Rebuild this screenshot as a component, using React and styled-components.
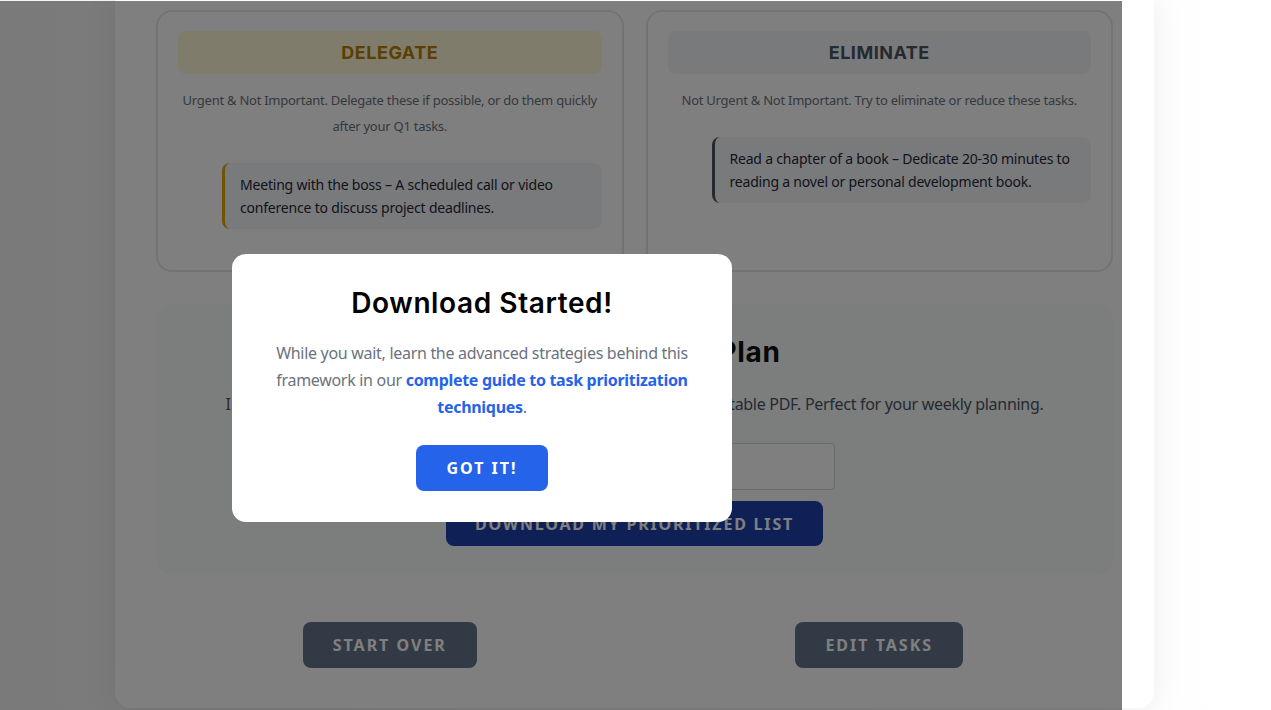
import React from 'react'
import styled, { createGlobalStyle } from 'styled-components'

const GlobalStyle = createGlobalStyle`
  html, body {
    margin: 0;
    padding: 0;
  }
  body {
    background: linear-gradient(90deg, #f5f5f5 0%, #fafafa 60%, #ffffff 100%);
    font-family: "Noto Sans", "Open Sans", sans-serif;
    color: #1f2937;
    overflow: hidden;
  }
`

const Page = styled.div`
  height: 710px;
  padding-right: 2px;
  overflow: hidden;
`

const Card = styled.div`
  width: 1039px;
  margin: 0 auto;
  box-sizing: border-box;
  padding: 10px 41px 40px;
  background: #ffffff;
  border-radius: 0 0 16px 16px;
  box-shadow: 0 0 34px rgba(0, 0, 0, 0.07);
`

const Matrix = styled.div`
  display: grid;
  grid-template-columns: 1fr 1fr;
  gap: 22px;
`

const Quadrant = styled.div`
  border: 2px solid #e5e7eb;
  border-radius: 16px;
  padding: 19px 20px 41px;
`

const Band = styled.h3`
  margin: 0;
  padding: 11px 0;
  border-radius: 8px;
  background: ${p => p.bg};
  color: ${p => p.color};
  font-family: Inter, "Noto Sans", sans-serif;
  font-size: 18px;
  font-weight: 700;
  line-height: 21px;
  text-align: center;
  letter-spacing: 0.5px;
`

const Desc = styled.p`
  margin: 13px 0 24px;
  font-size: 13px;
  line-height: 26px;
  color: #6b7280;
  text-align: center;
  letter-spacing: -0.25px;
`

const TaskList = styled.ul`
  list-style: none;
  margin: 0;
  padding: 0 0 0 44px;
`

const Task = styled.li`
  background: #f3f4f6;
  border-left: 3px solid ${p => p.accent};
  border-radius: 8px;
  padding: 10px 14px 10px 15px;
  font-size: 14px;
  line-height: 23px;
  color: #1f2937;
  letter-spacing: -0.2px;
`

const Export = styled.section`
  margin-top: 32px;
  background: #f9fafb;
  border-radius: 16px;
  padding: 31px 40px 29px;
  display: flex;
  flex-direction: column;
  align-items: center;
`

const ExportTitle = styled.h2`
  margin: 0;
  font-family: Inter, "Noto Sans", sans-serif;
  font-size: 28px;
  font-weight: 700;
  line-height: 34px;
  letter-spacing: 0.6px;
  color: #111111;
`

const ExportText = styled.p`
  margin: 23px 0 27px;
  font-size: 16px;
  line-height: 24px;
  color: #4b5563;
  text-align: center;
  letter-spacing: -0.3px;
  white-space: nowrap;
`

const EmailInput = styled.input`
  width: 400px;
  height: 47px;
  box-sizing: border-box;
  border: 1px solid #d1d5db;
  border-radius: 4px;
  padding: 0 14px;
  font-size: 16px;
  font-family: inherit;
  background: #ffffff;
`

const Button = styled.button`
  height: ${p => p.h || '46px'};
  padding: 0 ${p => p.px || '30px'};
  border: none;
  border-radius: 8px;
  background: ${p => p.bg};
  color: #ffffff;
  font-family: "Noto Sans", "Open Sans", sans-serif;
  font-size: 16px;
  font-weight: 700;
  letter-spacing: ${p => p.ls || '2px'};
  cursor: pointer;
`

const DownloadButton = styled(Button)`
  margin-top: 11px;
`

const Actions = styled.div`
  margin-top: 47px;
  display: grid;
  grid-template-columns: 1fr 1fr;
  gap: 22px;
  justify-items: center;
`

const Overlay = styled.div`
  position: fixed;
  top: 1px;
  left: 0;
  width: 1122px;
  bottom: 0;
  background: rgba(0, 0, 0, 0.5);
`

const Modal = styled.div`
  position: absolute;
  top: 253px;
  left: 232px;
  width: 500px;
  box-sizing: border-box;
  padding: 32px 36px 31px;
  background: #ffffff;
  border-radius: 14px;
  text-align: center;
`

const ModalTitle = styled.h2`
  margin: 0;
  font-family: Inter, "Noto Sans", sans-serif;
  font-size: 28px;
  font-weight: 600;
  line-height: 34px;
  letter-spacing: 0.6px;
  color: #000000;
`

const ModalText = styled.p`
  margin: 20px 0 24px;
  font-size: 16px;
  line-height: 27px;
  letter-spacing: -0.3px;
  color: #6b7280;
`

const GuideLink = styled.a`
  color: #2563eb;
  font-weight: 700;
  text-decoration: none;
`

const quadrants = [
  {
    title: 'DELEGATE',
    bg: '#fef9d6',
    color: '#b97f04',
    accent: '#e0a80a',
    desc: 'Urgent & Not Important. Delegate these if possible, or do them quickly after your Q1 tasks.',
    tasks: ['Meeting with the boss – A scheduled call or video conference to discuss project deadlines.'],
  },
  {
    title: 'ELIMINATE',
    bg: '#f3f4f6',
    color: '#4b5563',
    accent: '#4b5563',
    desc: 'Not Urgent & Not Important. Try to eliminate or reduce these tasks.',
    tasks: ['Read a chapter of a book – Dedicate 20-30 minutes to reading a novel or personal development book.'],
  },
]

function App() {
  return (
    <Page>
      <GlobalStyle />
      <Card>
        <Matrix>
          {quadrants.map(q => (
            <Quadrant key={q.title}>
              <Band bg={q.bg} color={q.color}>{q.title}</Band>
              <Desc>{q.desc}</Desc>
              <TaskList>
                {q.tasks.map(t => (
                  <Task key={t} accent={q.accent}>{t}</Task>
                ))}
              </TaskList>
            </Quadrant>
          ))}
        </Matrix>

        <Export>
          <ExportTitle>Get Your Action Plan</ExportTitle>
          <ExportText>
            Instantly download your prioritized Eisenhower Matrix as a clean, printable PDF. Perfect for your weekly planning.
          </ExportText>
          <EmailInput type="email" placeholder="Enter your email" />
          <DownloadButton bg="#1e40af" h="45px" px="29px" ls="1.8px">DOWNLOAD MY PRIORITIZED LIST</DownloadButton>
        </Export>

        <Actions>
          <Button bg="#64748b" px="30px">START OVER</Button>
          <Button bg="#64748b" px="30px">EDIT TASKS</Button>
        </Actions>
      </Card>

      <Overlay>
        <Modal>
          <ModalTitle>Download Started!</ModalTitle>
          <ModalText>
            While you wait, learn the advanced strategies behind this framework in our{' '}
            <GuideLink href="#">complete guide to task prioritization techniques</GuideLink>.
          </ModalText>
          <Button bg="#2563eb">GOT IT!</Button>
        </Modal>
      </Overlay>
    </Page>
  )
}

export default App
